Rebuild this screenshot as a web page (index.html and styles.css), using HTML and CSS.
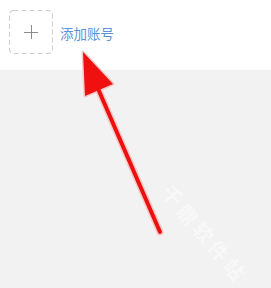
FILE: index.html
```html
<!DOCTYPE html>
<html>
<head>
<meta charset="utf-8">
<link rel="stylesheet" href="styles.css">
</head>
<body>
<div class="page">
  <div class="header">
    <div class="add-box">
      <svg class="box-border" width="44" height="44" viewBox="0 0 44 44">
        <rect x="0.5" y="0.5" width="43" height="43" rx="4" fill="none" stroke="#cfcfcf" stroke-width="1.2" stroke-dasharray="5 3"/>
      </svg>
      <span class="plus"></span>
    </div>
    <span class="add-text">添加账号</span>
  </div>
  <div class="content"></div>
  <svg class="arrow" width="271" height="288" viewBox="0 0 271 288">
    <line x1="160" y1="232" x2="96" y2="84" stroke="#f7c9c6" stroke-width="7" stroke-linecap="round"/>
    <polygon points="83,52 85,96 113,84" fill="#f7c9c6" stroke="#f7c9c6" stroke-width="3" stroke-linejoin="round"/>
    <line x1="160" y1="232" x2="96" y2="84" stroke="#ee0f0f" stroke-width="4" stroke-linecap="round"/>
    <polygon points="83,52 85,96 113,84" fill="#f01010"/>
  </svg>
  <div class="watermark">千鼎软件站</div>
</div>
</body>
</html>
```
FILE: styles.css
```css
html, body {
  margin: 0;
  padding: 0;
}
body {
  font-family: "Noto Sans CJK SC", "Noto Sans", sans-serif;
  background: #f2f2f2;
}
.page {
  position: relative;
  width: 271px;
  height: 288px;
  overflow: hidden;
  background: #f2f2f2;
}
.header {
  height: 70px;
  background: #ffffff;
  display: flex;
  align-items: flex-start;
  padding: 10px 0 0 9px;
  box-sizing: border-box;
}
.add-box {
  position: relative;
  width: 44px;
  height: 44px;
  display: flex;
  align-items: center;
  justify-content: center;
}
.box-border {
  position: absolute;
  left: 0;
  top: 0;
}
.plus {
  position: relative;
  width: 14px;
  height: 14px;
}
.plus::before, .plus::after {
  content: "";
  position: absolute;
  background: #8a8a8a;
}
.plus::before {
  left: 0;
  top: 6.5px;
  width: 14px;
  height: 1px;
}
.plus::after {
  top: 0;
  left: 6.5px;
  width: 1px;
  height: 14px;
}
.add-text {
  margin-left: 7px;
  margin-top: 14px;
  font-size: 13.5px;
  line-height: 18px;
  color: #5a93dc;
}
.arrow {
  position: absolute;
  left: 0;
  top: 0;
}
.watermark {
  position: absolute;
  left: 145px;
  top: 219px;
  font-size: 20px;
  font-weight: bold;
  color: rgba(255, 255, 255, 0.5);
  transform: rotate(50deg);
  transform-origin: center;
  white-space: nowrap;
  letter-spacing: 4px;
}
```
